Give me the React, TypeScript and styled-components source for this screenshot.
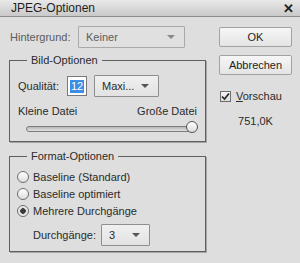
import React from 'react';
import styled, { createGlobalStyle } from 'styled-components';

const GlobalStyle = createGlobalStyle`
  html, body { margin: 0; padding: 0; }
  body {
    font-family: "Liberation Sans", Arial, sans-serif;
    font-size: 11px;
    color: #2b2b2b;
    background: #dedede;
  }
`;

const Dialog = styled.div`
  width: 300px;
  height: 263px;
  background: #dedede;
  overflow: hidden;
`;

const TitleBar = styled.div`
  height: 16px;
  display: flex;
  align-items: center;
  justify-content: space-between;
  padding: 0 6px 0 11px;
  background: linear-gradient(#e9e9e9, #c9c9c9);
  border-bottom: 1px solid #8c8c8c;
  font-size: 12px;
  color: #1e1e1e;
`;

const Close = styled.span`
  font-weight: bold;
  font-size: 13px;
  color: #222;
`;

const Body = styled.div`
  display: flex;
  padding: 0 8px 0 9px;
`;

const LeftCol = styled.div`
  width: 197px;
  display: flex;
  flex-direction: column;
`;

const RightCol = styled.div`
  width: 73px;
  margin-left: 13px;
  display: flex;
  flex-direction: column;
  padding-top: 10px;
`;

const Row = styled.div<{ $top?: number; $left?: number }>`
  display: flex;
  align-items: center;
  margin-top: ${(p) => p.$top ?? 0}px;
  padding-left: ${(p) => p.$left ?? 0}px;
`;

const Label = styled.span<{ $muted?: boolean; $width?: number }>`
  color: ${(p) => (p.$muted ? '#5c5c5c' : '#2b2b2b')};
  width: ${(p) => (p.$width ? `${p.$width}px` : 'auto')};
  flex-shrink: 0;
`;

const Select = styled.div<{ $width: number; $muted?: boolean }>`
  width: ${(p) => p.$width}px;
  height: 22px;
  box-sizing: border-box;
  display: flex;
  align-items: center;
  justify-content: space-between;
  padding: 0 9px 0 7px;
  border: 1px solid ${(p) => (p.$muted ? '#a9a9a9' : '#8e8e8e')};
  border-radius: 1px;
  background: ${(p) => (p.$muted ? '#e0e0e0' : 'linear-gradient(#f0f0f0, #e2e2e2)')};
  color: ${(p) => (p.$muted ? '#5c5c5c' : '#2b2b2b')};
`;

const Arrow = styled.span<{ $muted?: boolean }>`
  width: 0;
  height: 0;
  border-left: 4px solid transparent;
  border-right: 4px solid transparent;
  border-top: 4px solid ${(p) => (p.$muted ? '#8a8a8a' : '#555')};
`;

const Group = styled.fieldset<{ $top: number; $height: number }>`
  margin: ${(p) => p.$top}px 0 0 0;
  height: ${(p) => p.$height}px;
  box-sizing: border-box;
  padding: 0 8px 0 8px;
  border: 1px solid #5f5f5f;
  box-shadow: 1px 1px 0 #a5a5a5;
  min-width: 0;
`;

const Legend = styled.legend`
  margin-left: 9px;
  padding: 0 4px;
  color: #2b2b2b;
  line-height: 13px;
`;

const QualityInput = styled.div`
  width: 20px;
  height: 20px;
  box-sizing: border-box;
  margin-left: 8px;
  border: 1px solid #7a7a7a;
  background: #fff;
  display: flex;
  align-items: center;
  padding-left: 2px;
`;

const Selected = styled.span`
  background: #3a8ee6;
  color: #fff;
  padding: 0 1px;
  line-height: 13px;
`;

const SizeLabels = styled.div`
  display: flex;
  justify-content: space-between;
  margin-top: 8px;
  padding-right: 0;
`;

const SliderTrack = styled.div`
  position: relative;
  margin: 9px 1px 0 8px;
  height: 4px;
  border: 1px solid #7d7d7d;
  border-radius: 3px;
  background: linear-gradient(#b8b8b8, #e2e2e2);
`;

const Thumb = styled.div`
  position: absolute;
  right: -3px;
  top: -6px;
  width: 12px;
  height: 12px;
  box-sizing: border-box;
  border: 1px solid #555;
  border-radius: 50%;
  background: linear-gradient(#ffffff, #dcdcdc);
`;

const RadioRow = styled.div<{ $first?: boolean }>`
  display: flex;
  align-items: center;
  height: 17px;
  margin-top: ${(p) => (p.$first ? 5 : 0)}px;
`;

const Radio = styled.span<{ $checked?: boolean }>`
  width: 12px;
  height: 12px;
  box-sizing: border-box;
  border-radius: 50%;
  border: 1px solid #6e6e6e;
  background: ${(p) =>
    p.$checked
      ? 'radial-gradient(circle, #3a3a3a 0 2.5px, #d8d8d8 3px, #f2f2f2 5px)'
      : 'linear-gradient(#ffffff, #dedede)'};
  margin-right: 4px;
  margin-left: -1px;
`;

const Button = styled.div<{ $top?: number }>`
  height: 20px;
  box-sizing: border-box;
  margin-top: ${(p) => p.$top ?? 0}px;
  display: flex;
  align-items: center;
  justify-content: center;
  border: 1px solid #a2a2a2;
  border-radius: 2px;
  background: linear-gradient(#f6f6f6, #e4e4e4);
  color: #1e1e1e;
  font-size: 11px;
`;

const CheckRow = styled.div`
  display: flex;
  align-items: center;
  margin-top: 15px;
  margin-left: 1px;
`;

const CheckBox = styled.span`
  width: 11px;
  height: 11px;
  box-sizing: border-box;
  border: 1px solid #6e6e6e;
  background: linear-gradient(#f5f5f5, #dcdcdc);
  display: flex;
  align-items: center;
  justify-content: center;
  margin-right: 5px;
`;

const Size = styled.div`
  margin-top: 13px;
  text-align: center;
`;

export default function App() {
  return (
    <Dialog>
      <GlobalStyle />
      <TitleBar>
        <span>JPEG-Optionen</span>
        <Close>✕</Close>
      </TitleBar>
      <Body>
        <LeftCol>
          <Row $top={9} $left={1}>
            <Label $muted $width={68}>Hintergrund:</Label>
            <Select $width={107} $muted>
              <span>Keiner</span>
              <Arrow $muted />
            </Select>
          </Row>

          <Group $top={6} $height={88}>
            <Legend>Bild-Optionen</Legend>
            <Row $top={8}>
              <Label>Qualität:</Label>
              <QualityInput>
                <Selected>12</Selected>
              </QualityInput>
              <Select $width={65} style={{ marginLeft: 7 }}>
                <span>Maxi...</span>
                <Arrow />
              </Select>
            </Row>
            <SizeLabels>
              <span>Kleine Datei</span>
              <span>Große Datei</span>
            </SizeLabels>
            <SliderTrack>
              <Thumb />
            </SliderTrack>
          </Group>

          <Group $top={8} $height={102}>
            <Legend>Format-Optionen</Legend>
            <RadioRow $first>
              <Radio />
              <span>Baseline (Standard)</span>
            </RadioRow>
            <RadioRow>
              <Radio />
              <span>Baseline optimiert</span>
            </RadioRow>
            <RadioRow>
              <Radio $checked />
              <span>Mehrere Durchgänge</span>
            </RadioRow>
            <Row $top={5} $left={15}>
              <Label $width={68}>Durchgänge:</Label>
              <Select $width={49}>
                <span>3</span>
                <Arrow />
              </Select>
            </Row>
          </Group>
        </LeftCol>

        <RightCol>
          <Button>OK</Button>
          <Button $top={8}>Abbrechen</Button>
          <CheckRow>
            <CheckBox>
              <svg width="9" height="9" viewBox="0 0 9 9">
                <path d="M1 4.5 L3.5 7 L8 1.5" fill="none" stroke="#222" strokeWidth="1.6" />
              </svg>
            </CheckBox>
            <span>
              <u>V</u>orschau
            </span>
          </CheckRow>
          <Size>751,0K</Size>
        </RightCol>
      </Body>
    </Dialog>
  );
}
